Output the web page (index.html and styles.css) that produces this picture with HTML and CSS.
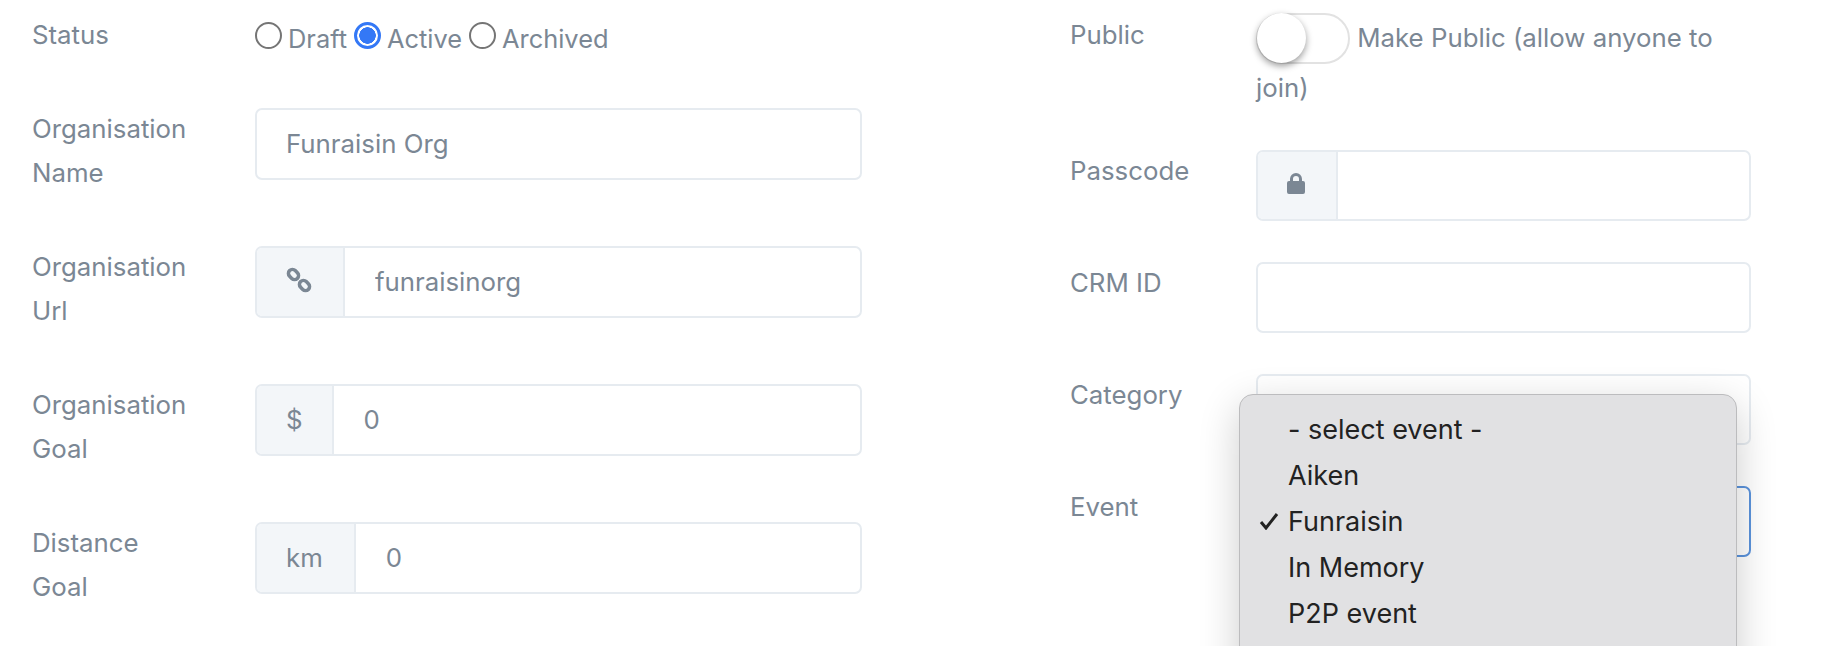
FILE: index.html
```html
<!DOCTYPE html>
<html lang="en">
<head>
    <meta charset="UTF-8">
    <title>Organisation Settings</title>
    <link rel="stylesheet" href="styles.css">
</head>
<body>
    <form class="settings">
        <div class="col col-left">
            <div class="row row-status">
                <label class="label">Status</label>
                <div class="radios">
                    <input type="radio" name="status" id="draft"><label for="draft">Draft</label>
                    <input type="radio" name="status" id="active" checked><label for="active">Active</label>
                    <input type="radio" name="status" id="archived"><label for="archived">Archived</label>
                </div>
            </div>
            <div class="row">
                <label class="label">Organisation Name</label>
                <div class="input-group">
                    <input type="text" value="Funraisin Org">
                </div>
            </div>
            <div class="row">
                <label class="label">Organisation Url</label>
                <div class="input-group">
                    <span class="addon addon-wide">
                        <svg class="icon-link" viewBox="0 0 26 26" width="26" height="26">
                            <rect x="2" y="3.5" width="11" height="8" rx="4" transform="rotate(45 7.5 7.5)"/>
                            <rect x="13" y="14.5" width="11" height="8" rx="4" transform="rotate(45 18.5 18.5)"/>
                        </svg>
                    </span>
                    <input type="text" value="funraisinorg">
                </div>
            </div>
            <div class="row">
                <label class="label">Organisation Goal</label>
                <div class="input-group">
                    <span class="addon">$</span>
                    <input type="text" value="0">
                </div>
            </div>
            <div class="row">
                <label class="label">Distance Goal</label>
                <div class="input-group">
                    <span class="addon addon-wide">km</span>
                    <input type="text" value="0">
                </div>
            </div>
        </div>

        <div class="col col-right">
            <div class="row row-public">
                <label class="label">Public</label>
                <div class="public-text">
                    <span class="toggle"><span class="knob"></span></span>
                    Make Public (allow anyone to join)
                </div>
            </div>
            <div class="row">
                <label class="label">Passcode</label>
                <div class="input-group">
                    <span class="addon addon-wide">
                        <svg class="icon-lock" viewBox="0 0 18 22" width="18" height="22">
                            <path d="M3 9V7a6 6 0 0 1 12 0v2h1a2 2 0 0 1 2 2v9a2 2 0 0 1-2 2H2a2 2 0 0 1-2-2v-9a2 2 0 0 1 2-2zm3 0h6V7a3 3 0 0 0-6 0z"/>
                        </svg>
                    </span>
                    <input type="text">
                </div>
            </div>
            <div class="row">
                <label class="label">CRM ID</label>
                <div class="input-group">
                    <input type="text">
                </div>
            </div>
            <div class="row">
                <label class="label">Category</label>
                <div class="input-group">
                    <input type="text">
                </div>
            </div>
            <div class="row row-event">
                <label class="label">Event</label>
                <div class="input-group focused"></div>
                <!-- native select popup, open -->
                <ul class="dropdown">
                    <li>- select event -</li>
                    <li>Aiken</li>
                    <li class="selected">
                        <svg class="check" viewBox="0 0 20 18" width="20" height="18">
                            <polyline points="2,10 7,16 18,2"/>
                        </svg>
                        Funraisin
                    </li>
                    <li>In Memory</li>
                    <li>P2P event</li>
                </ul>
            </div>
        </div>
    </form>
</body>
</html>
```

FILE: styles.css
```css
html, body {
    margin: 0;
    height: 646px;
    overflow: hidden;
    background-color: white;
}

body {
    font-family: "Inter", "Liberation Sans", sans-serif;
    font-size: 25.8px;
    color: #7b8794;
}

.settings {
    display: flex;
    height: 633px;
    overflow: hidden;
    padding: 13px 0 0 32px;
}

.col-left {
    width: 830px;
    margin-right: 208px;
}

.col-right {
    width: 681px;
}

.row {
    display: flex;
    min-height: 88px;
    margin-bottom: 50px;
}

.col-right .row {
    min-height: 0;
    margin-bottom: 41px;
}

.label {
    line-height: 44px;
    margin-top: -1px;
}

.col-left .label {
    flex: 0 0 223px;
    width: 223px;
    padding-right: 60px;
    box-sizing: border-box;
}

.col-right .label {
    flex: 0 0 186px;
    width: 186px;
}

.row-status {
    min-height: 0;
    margin-bottom: 45px;
}

.row-status .label,
.row-public .label {
    margin-top: 0;
}

.col-right .row-public {
    margin-bottom: 37px;
}

.radios {
    display: flex;
    align-items: center;
    height: 50px;
    font-size: 25.4px;
}

.radios input {
    appearance: none;
    width: 27px;
    height: 27px;
    margin: -6px 6px 0 0;
    border: 2px solid #757575;
    border-radius: 50%;
    box-sizing: border-box;
    background: white;
}

.radios input:checked {
    border: 3px solid #3478f6;
    background: radial-gradient(circle, #3478f6 0 8px, white 8.5px);
}

.radios label {
    margin-right: 7px;
}

.input-group {
    flex: 1;
    display: flex;
    height: 72px;
    border: 2px solid #e6ebf0;
    border-radius: 7px;
    box-sizing: border-box;
    overflow: hidden;
    background-color: white;
}

.col-right .input-group {
    height: 71px;
}

.input-group.focused {
    border-color: #5b93dc;
}

.input-group input {
    flex: 1;
    min-width: 0;
    padding: 0 29px 2px;
    border: none;
    outline: none;
    font: inherit;
    color: inherit;
    background: none;
}

.addon + input {
    padding-left: 30px;
}

.addon {
    display: flex;
    align-items: center;
    padding: 0 29px 2px;
    background-color: #f3f6f9;
    border-right: 2px solid #e6ebf0;
}

.addon-wide {
    padding-right: 31px;
}

.icon-link {
    margin-top: -3px;
}

.icon-link rect {
    fill: none;
    stroke: #7b8794;
    stroke-width: 3.5;
}

.icon-lock {
    margin-top: -3px;
}

.icon-lock path {
    fill: #7b8794;
    fill-rule: evenodd;
}

.public-text {
    flex: 1;
    line-height: 50px;
}

.toggle {
    display: inline-block;
    position: relative;
    width: 94px;
    height: 51px;
    margin-bottom: -1px;
    vertical-align: top;
    border: 2px solid #e2e2e2;
    border-radius: 26px;
    box-sizing: border-box;
    background-color: white;
}

.knob {
    position: absolute;
    top: -2px;
    left: -1px;
    width: 49px;
    height: 50px;
    border-radius: 50%;
    background-color: white;
    box-shadow: 0 3px 7px rgba(0,0,0,0.4);
}

.row-event {
    position: relative;
}

.dropdown {
    position: absolute;
    top: -92.5px;
    left: 169px;
    width: 498px;
    height: 300px;
    margin: 0;
    padding: 12px 0 0 48px;
    box-sizing: border-box;
    list-style: none;
    background-color: #e1e1e3;
    border: 1px solid #bcbcbe;
    border-radius: 14px;
    box-shadow: 0 12px 40px rgba(0,0,0,0.2);
    font-size: 27px;
    color: #222;
}

.dropdown li {
    position: relative;
    line-height: 46px;
    height: 46px;
}

.check {
    position: absolute;
    top: 13px;
    left: -29px;
}

.check polyline {
    fill: none;
    stroke: #222;
    stroke-width: 3;
}
```
